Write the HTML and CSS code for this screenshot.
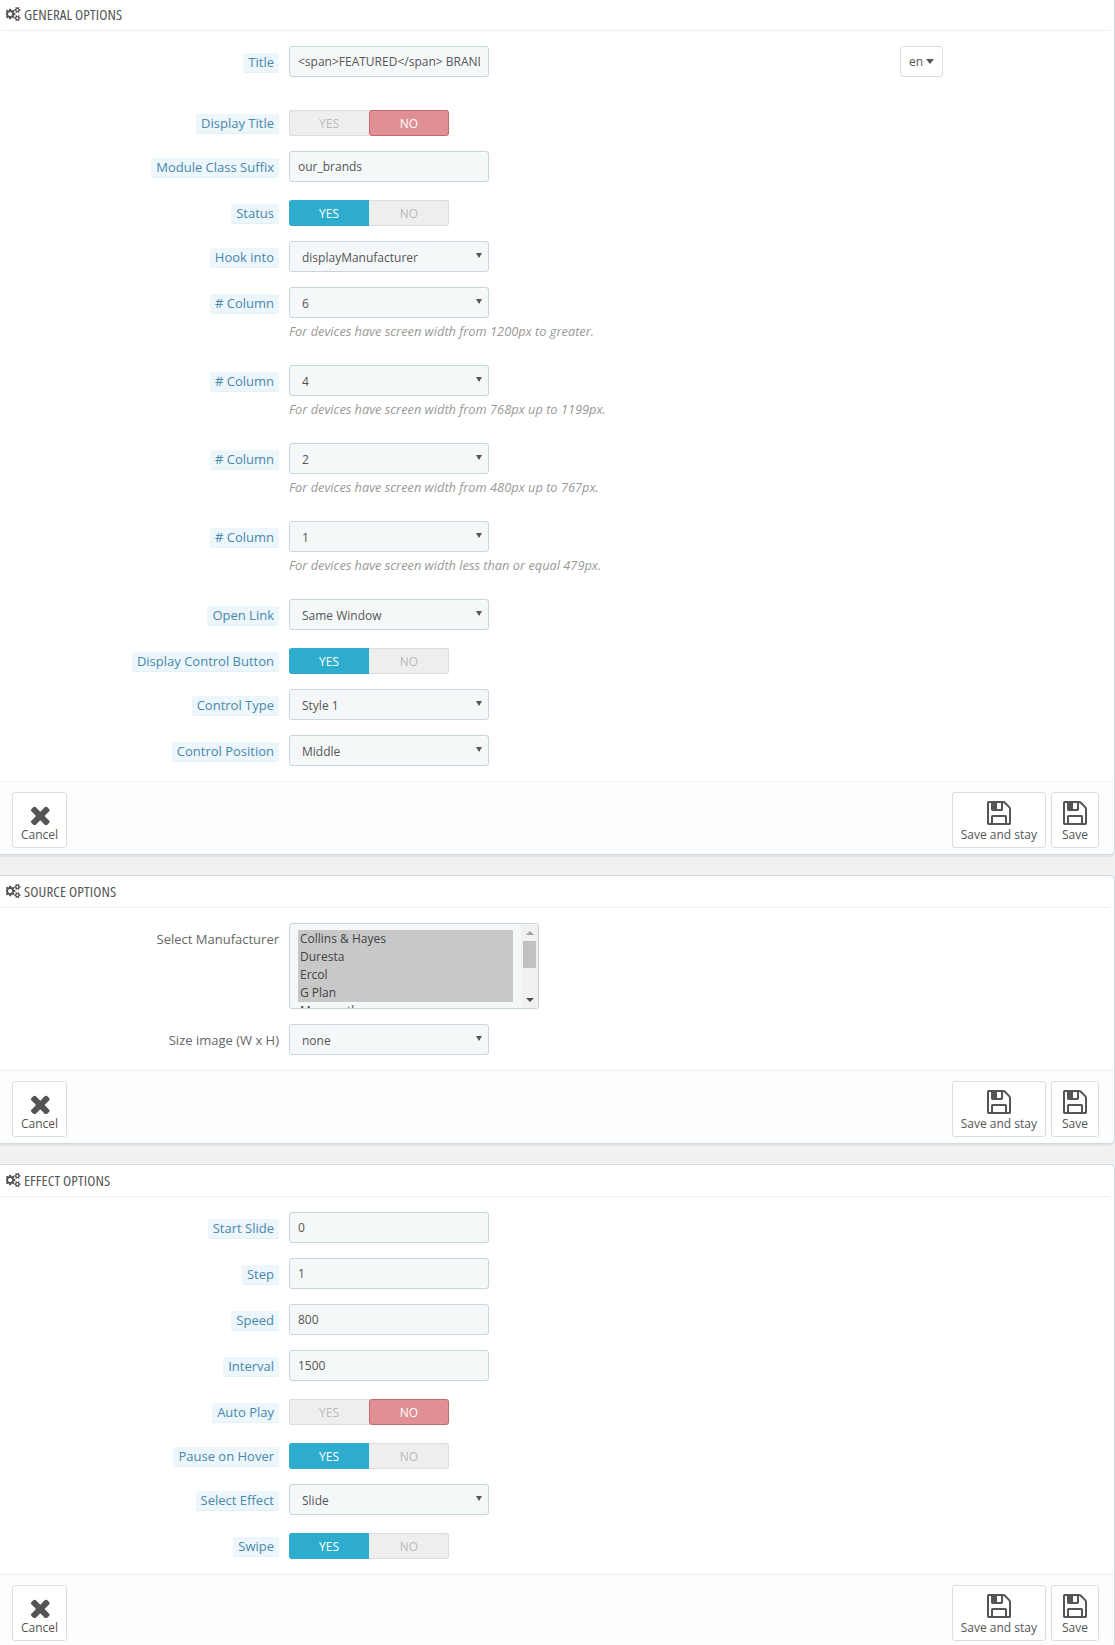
FILE: index.html
```html
<!DOCTYPE html>
<html lang="en">
<head>
<meta charset="utf-8">
<title>Module options</title>
<link rel="stylesheet" href="styles.css">
</head>
<body>
<svg class="defs" width="0" height="0" aria-hidden="true">
  <defs>
    <symbol id="gears" viewBox="64 128 1856 1536">
      <path d="M832 896q0-106-75-181t-181-75-181 75-75 181 75 181 181 75 181-75 75-181zm768 512q0-52-38-90t-90-38-90 38-38 90q0 53 37.500 90.500t90.500 37.500 90.500-37.500 37.500-90.500zm0-1024q0-52-38-90t-90-38-90 38-38 90q0 53 37.500 90.500t90.500 37.500 90.500-37.500 37.500-90.500zm-384 421v185q0 10-7 19.500t-16 10.500l-155 24q-11 35-32 76 34 48 90 115 7 11 7 20 0 12-7 19-23 30-82.500 89.500t-78.500 59.500q-11 0-21-7l-115-90q-37 19-77 31-11 108-23 155-7 24-30 24h-186q-11 0-20-7.500t-10-17.500l-23-153q-34-10-75-31l-118 89q-7 7-20 7-11 0-21-8-144-133-144-160 0-9 7-19 10-14 41-53t47-61q-23-44-35-82l-152-24q-10-1-17-9.500t-7-19.500v-185q0-10 7-19.500t16-10.500l155-24q11-35 32-76-34-48-90-115-7-11-7-20 0-12 7-20 22-30 82-89t79-59q11 0 21 7l115 90q34-18 77-32 11-108 23-154 7-24 30-24h186q11 0 20 7.500t10 17.500l23 153q34 10 75 31l118-89q8-7 20-7 11 0 21 8 144 133 144 160 0 8-7 19-12 16-42 54t-45 60q23 48 34 82l152 23q10 2 17 10.500t7 19.500zm640 533v140q0 16-149 31-12 27-30 52 51 113 51 138 0 4-4 7-122 71-124 71-8 0-46-47t-52-68q-20 2-30 2t-30-2q-14 21-52 68t-46 47q-2 0-124-71-4-3-4-7 0-25 51-138-18-25-30-52-149-15-149-31v-140q0-16 149-31 13-29 30-52-51-113-51-138 0-4 4-7 4-2 35-20t59-34 30-16q8 0 46 46.500t52 67.500q20-2 30-2t30 2q51-71 92-112l6-2q4 0 124 70 4 3 4 7 0 25-51 138 17 23 30 52 149 15 149 31zm0-1024v140q0 16-149 31-12 27-30 52 51 113 51 138 0 4-4 7-122 71-124 71-8 0-46-47t-52-68q-20 2-30 2t-30-2q-14 21-52 68t-46 47q-2 0-124-71-4-3-4-7 0-25 51-138-18-25-30-52-149-15-149-31v-140q0-16 149-31 13-29 30-52-51-113-51-138 0-4 4-7 4-2 35-20t59-34 30-16q8 0 46 46.500t52 67.500q20-2 30-2t30 2q51-71 92-112l6-2q4 0 124 70 4 3 4 7 0 25-51 138 17 23 30 52 149 15 149 31z"/>
    </symbol>
    <symbol id="save" viewBox="128 128 1536 1536">
      <path d="M512 1536h768v-384h-768v384zm896 0h128v-896q0-14-10-38.500t-20-34.500l-281-281q-10-10-34-20t-39-10v416q0 40-28 68t-68 28h-576q-40 0-68-28t-28-68v-416h-128v1280h128v-416q0-40 28-68t68-28h832q40 0 68 28t28 68v416zm-384-928v-320q0-13-9.500-22.500t-22.500-9.500h-192q-13 0-22.500 9.500t-9.500 22.500v320q0 13 9.500 22.500t22.500 9.500h192q13 0 22.500-9.500t9.500-22.500zm640 32v928q0 40-28 68t-68 28h-1344q-40 0-68-28t-28-68v-1344q0-40 28-68t68-28h928q40 0 88 20t76 48l280 280q28 28 48 76t20 88z"/>
    </symbol>
    <symbol id="cross" viewBox="266 262 1224 1268">
      <path d="M1490 1322q0 40-28 68l-136 136q-28 28-68 28t-68-28l-294-294-294 294q-28 28-68 28t-68-28l-136-136q-28-28-28-68t28-68l294-294-294-294q-28-28-28-68t28-68l136-136q28-28 68-28t68 28l294 294 294-294q28-28 68-28t68 28l136 136q28 28 28 68t-28 68l-294 294 294 294q28 28 28 68z"/>
    </symbol>
  </defs>
</svg>

<main class="page">
  <section class="panel panel-first">
    <h2 class="panel-heading"><svg class="gear-icon"><use href="#gears"/></svg><span class="heading-text">GENERAL OPTIONS</span></h2>
    <div class="panel-body">
      <div class="row row-title">
        <label class="label"><span class="hint">Title</span></label>
        <input class="field" type="text" value="&lt;span&gt;FEATURED&lt;/span&gt; BRANDS">
        <button class="lang" type="button">en<span class="caret"></span></button>
      </div>
      <div class="row row-switch">
        <label class="label"><span class="hint">Display Title</span></label>
        <div class="switch"><span class="opt">YES</span><span class="opt opt-no">NO</span></div>
      </div>
      <div class="row">
        <label class="label"><span class="hint">Module Class Suffix</span></label>
        <input class="field" type="text" value="our_brands">
      </div>
      <div class="row row-switch">
        <label class="label"><span class="hint">Status</span></label>
        <div class="switch"><span class="opt opt-yes">YES</span><span class="opt">NO</span></div>
      </div>
      <div class="row">
        <label class="label"><span class="hint">Hook into</span></label>
        <div class="select">displayManufacturer</div>
      </div>
      <div class="row row-help">
        <label class="label"><span class="hint">&#35; Column</span></label>
        <div class="stack"><div class="select">6</div><p class="help">For devices have screen width from 1200px to greater.</p></div>
      </div>
      <div class="row row-help">
        <label class="label"><span class="hint">&#35; Column</span></label>
        <div class="stack"><div class="select">4</div><p class="help">For devices have screen width from 768px up to 1199px.</p></div>
      </div>
      <div class="row row-help">
        <label class="label"><span class="hint">&#35; Column</span></label>
        <div class="stack"><div class="select">2</div><p class="help">For devices have screen width from 480px up to 767px.</p></div>
      </div>
      <div class="row row-help">
        <label class="label"><span class="hint">&#35; Column</span></label>
        <div class="stack"><div class="select">1</div><p class="help">For devices have screen width less than or equal 479px.</p></div>
      </div>
      <div class="row">
        <label class="label"><span class="hint">Open Link</span></label>
        <div class="select">Same Window</div>
      </div>
      <div class="row row-switch">
        <label class="label"><span class="hint">Display Control Button</span></label>
        <div class="switch"><span class="opt opt-yes">YES</span><span class="opt">NO</span></div>
      </div>
      <div class="row">
        <label class="label"><span class="hint">Control Type</span></label>
        <div class="select">Style 1</div>
      </div>
      <div class="row">
        <label class="label"><span class="hint">Control Position</span></label>
        <div class="select">Middle</div>
      </div>
    </div>
    <footer class="panel-footer">
      <button class="btn" type="button"><svg class="icon-cross"><use href="#cross"/></svg>Cancel</button>
      <span class="spacer"></span>
      <button class="btn" type="button"><svg class="icon-save"><use href="#save"/></svg>Save and stay</button>
      <button class="btn" type="button"><svg class="icon-save"><use href="#save"/></svg>Save</button>
    </footer>
  </section>

  <section class="panel">
    <h2 class="panel-heading"><svg class="gear-icon"><use href="#gears"/></svg><span class="heading-text">SOURCE OPTIONS</span></h2>
    <div class="panel-body">
      <div class="row">
        <label class="label label-plain">Select Manufacturer</label>
        <div class="listbox">
          <div class="list-items">
            <div class="list-item">Collins &amp; Hayes</div>
            <div class="list-item">Duresta</div>
            <div class="list-item">Ercol</div>
            <div class="list-item">G Plan</div>
            <div class="list-item list-item-off">Mammoth</div>
          </div>
          <div class="scrollbar"><span class="arrow-up"></span><span class="thumb"></span><span class="arrow-down"></span></div>
        </div>
      </div>
      <div class="row">
        <label class="label label-plain">Size image (W x H)</label>
        <div class="select">none</div>
      </div>
    </div>
    <footer class="panel-footer">
      <button class="btn" type="button"><svg class="icon-cross"><use href="#cross"/></svg>Cancel</button>
      <span class="spacer"></span>
      <button class="btn" type="button"><svg class="icon-save"><use href="#save"/></svg>Save and stay</button>
      <button class="btn" type="button"><svg class="icon-save"><use href="#save"/></svg>Save</button>
    </footer>
  </section>

  <section class="panel">
    <h2 class="panel-heading"><svg class="gear-icon"><use href="#gears"/></svg><span class="heading-text">EFFECT OPTIONS</span></h2>
    <div class="panel-body">
      <div class="row">
        <label class="label"><span class="hint">Start Slide</span></label>
        <input class="field" type="text" value="0">
      </div>
      <div class="row">
        <label class="label"><span class="hint">Step</span></label>
        <input class="field" type="text" value="1">
      </div>
      <div class="row">
        <label class="label"><span class="hint">Speed</span></label>
        <input class="field" type="text" value="800">
      </div>
      <div class="row">
        <label class="label"><span class="hint">Interval</span></label>
        <input class="field" type="text" value="1500">
      </div>
      <div class="row row-switch">
        <label class="label"><span class="hint">Auto Play</span></label>
        <div class="switch"><span class="opt">YES</span><span class="opt opt-no">NO</span></div>
      </div>
      <div class="row row-switch">
        <label class="label"><span class="hint">Pause on Hover</span></label>
        <div class="switch"><span class="opt opt-yes">YES</span><span class="opt">NO</span></div>
      </div>
      <div class="row">
        <label class="label"><span class="hint">Select Effect</span></label>
        <div class="select">Slide</div>
      </div>
      <div class="row row-switch">
        <label class="label"><span class="hint">Swipe</span></label>
        <div class="switch"><span class="opt opt-yes">YES</span><span class="opt">NO</span></div>
      </div>
    </div>
    <footer class="panel-footer">
      <button class="btn" type="button"><svg class="icon-cross"><use href="#cross"/></svg>Cancel</button>
      <span class="spacer"></span>
      <button class="btn" type="button"><svg class="icon-save"><use href="#save"/></svg>Save and stay</button>
      <button class="btn" type="button"><svg class="icon-save"><use href="#save"/></svg>Save</button>
    </footer>
  </section>
</main>
</body>
</html>
```
FILE: styles.css
```css
* { box-sizing: border-box; }
html, body { margin: 0; padding: 0; }
body {
  background: #eff1f2;
  font-family: "Open Sans", "Liberation Sans", sans-serif;
  font-size: 12px;
  color: #555;
  height: 1645px;
  overflow: hidden;
}
.defs { position: absolute; }
.page { display: flex; flex-direction: column; gap: 20px; }
.panel {
  background: #fff;
  border: 1px solid #d3d8db;
  border-left: 0;
  border-radius: 0 5px 5px 0;
  box-shadow: 0 2px 0 rgba(0,0,0,.05);
}
.panel-first { border-top: 0; border-radius: 0 0 5px 0; }
.panel-heading {
  display: flex;
  align-items: center;
  height: 32px;
  margin: 0 4px 0 1px;
  padding: 1px 0 2px 5px;
  border-bottom: 1px solid #eee;
  font-size: 15px;
  font-weight: 400;
  color: #555;
}
.panel-first .panel-heading { height: 31px; padding-top: 0; }
.gear-icon { width: 15px; height: 14px; margin-right: 3px; fill: #555; }
.heading-text { font-stretch: 75%; letter-spacing: .1px; white-space: nowrap; }
.panel-body { display: flex; flex-direction: column; gap: 15px; padding: 15px 0; }
.row { display: flex; align-items: flex-start; min-height: 31px; }
.row-title { margin-bottom: 15px; }
.row-switch { min-height: 29px; padding-top: 3px; }
.row-help { min-height: 63px; }
.label {
  width: 279px;
  flex: none;
  text-align: right;
  margin-right: 10px;
  padding-top: 7px;
  font-size: 13px;
  line-height: 18px;
  font-weight: 400;
}
.row-switch .label { padding-top: 4px; }
.label-plain { color: #666; }
.hint {
  display: inline-block;
  height: 19px;
  line-height: 18px;
  padding: 0 5px;
  background: #edf6fb;
  border-radius: 2px;
  box-shadow: 0 1px 0 #e3f0f8;
  color: #4788ad;
}
.stack { display: flex; flex-direction: column; }
.field, .select {
  width: 200px;
  height: 31px;
  border: 1px solid #c7d6db;
  border-radius: 3px;
  background: #f5f8f9;
  color: #555;
  font: 12px "Open Sans", sans-serif;
  padding: 0 8px;
}
.select { display: flex; align-items: center; padding: 2px 0 0 12px; position: relative; }
.select::after {
  content: "";
  position: absolute;
  right: 6px;
  top: 11px;
  border-left: 3px solid transparent;
  border-right: 3px solid transparent;
  border-top: 5px solid #555;
}
.help { margin: 5px 0 0; font-style: italic; color: #999; font-size: 12.8px; line-height: 17px; white-space: nowrap; }
.lang {
  margin-left: 411px;
  width: 43px;
  height: 31px;
  background: #fff;
  border: 1px solid #ddd;
  border-radius: 3px;
  color: #555;
  font: 12px "Open Sans", sans-serif;
  padding: 0;
}
.caret { display: inline-block; margin-left: 3px; vertical-align: 2px; border-left: 4.500px solid transparent; border-right: 4.500px solid transparent; border-top: 5px solid #555; }
.switch { display: flex; width: 160px; height: 26px; background: #eee; border-radius: 3px; box-shadow: inset 0 0 0 1px #ddd, inset 0 1px 1px #d5d5d5; }
.opt { width: 80px; flex: none; display: flex; align-items: center; justify-content: center; color: #bbb; font-size: 12px; }
.opt-no { background: #e08f95; border: 1px solid #c7686e; color: #fff; border-radius: 3px; font-weight: 500; }
.opt-yes { background: #2eacce; color: #fff; border-radius: 3px 0 0 3px; font-weight: 500; }
.listbox {
  width: 250px;
  height: 86px;
  border: 1px solid #c7d6db;
  border-radius: 3px;
  background: #f5f8f9;
  display: flex;
  justify-content: space-between;
  overflow: hidden;
}
.list-items { padding: 6px 0 0 8px; width: 223px; flex: none; height: 84px; overflow: hidden; }
.list-item { height: 18px; line-height: 18px; padding-left: 2px; background: #c8c8c8; font-size: 12px; color: #444; white-space: nowrap; }
.list-item-off { background: none; }
.scrollbar { width: 17px; height: 84px; background: #f1f1f1; display: flex; flex-direction: column; align-items: center; position: relative; }
.arrow-up { margin-top: 7px; border-left: 4px solid transparent; border-right: 4px solid transparent; border-bottom: 4px solid #a3a3a3; }
.thumb { width: 13px; height: 27px; margin-top: 6px; background: #c1c1c1; }
.arrow-down { position: absolute; bottom: 6px; border-left: 4px solid transparent; border-right: 4px solid transparent; border-top: 4px solid #505050; }
.panel-footer {
  display: flex;
  height: 73px;
  padding: 10px 15px 0 12px;
  gap: 5px;
  background: #fcfdfe;
  border-top: 1px solid #eee;
  border-radius: 0 0 5px 0;
}
.spacer { flex: 1; }
.btn {
  display: flex;
  flex-direction: column;
  align-items: center;
  height: 56px;
  min-width: 48px;
  padding: 8px 8px 0;
  background: #fff;
  border: 1px solid #ddd;
  border-radius: 3px;
  color: #555;
  font: 12px/18px "Open Sans", sans-serif;
}
.icon-cross { width: 20px; height: 20px; margin: 4px 0 1px; fill: #555; }
.icon-save { width: 24px; height: 24px; margin-bottom: 1px; fill: #555; }
```
